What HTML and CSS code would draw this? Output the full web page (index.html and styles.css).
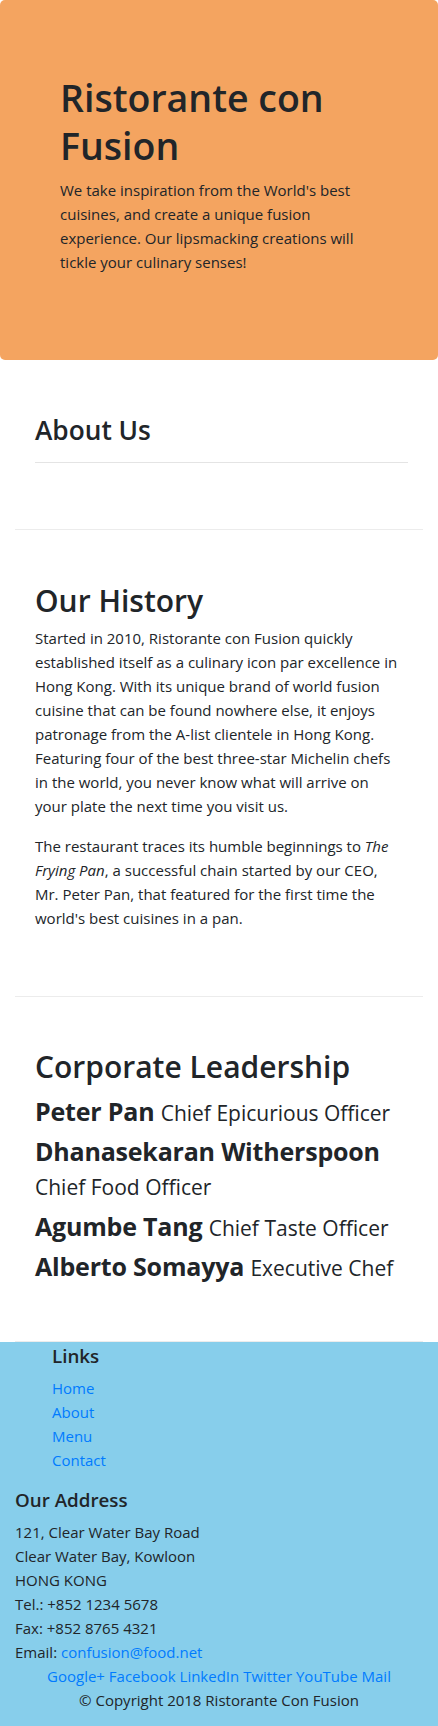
FILE: index.html
```html
<!DOCTYPE html>
<html lang="en">
<head>
<meta charset="utf-8">
<title>Ristorante con Fusion - About Us</title>
<link rel="stylesheet" href="styles.css">
</head>
<body>
<header class="jumbotron">
  <h1 class="jumbo-title">Ristorante con Fusion</h1>
  <p class="jumbo-text">We take inspiration from the World's best cuisines, and create a unique fusion experience. Our lipsmacking creations will tickle your culinary senses!</p>
</header>

<main>
  <section class="row-content row-about">
    <h3 class="section-title">About Us</h3>
    <hr class="divider">
  </section>

  <section class="row-content row-history">
    <h2 class="section-heading">Our History</h2>
    <p class="history-text">Started in 2010, Ristorante con Fusion quickly established itself as a culinary icon par excellence in Hong Kong. With its unique brand of world fusion cuisine that can be found nowhere else, it enjoys patronage from the A-list clientele in Hong Kong. Featuring four of the best three-star Michelin chefs in the world, you never know what will arrive on your plate the next time you visit us.</p>
    <p class="history-text">The restaurant traces its humble beginnings to <em>The Frying Pan</em>, a successful chain started by our CEO, Mr. Peter Pan, that featured for the first time the world's best cuisines in a pan.</p>
  </section>

  <section class="row-content row-leaders">
    <h2 class="section-heading leaders-heading">Corporate Leadership</h2>
    <ul class="leader-list">
      <li class="leader">Peter Pan <small class="leader-role">Chief Epicurious Officer</small></li>
      <li class="leader">Dhanasekaran Witherspoon <small class="leader-role">Chief Food Officer</small></li>
      <li class="leader">Agumbe Tang <small class="leader-role">Chief Taste Officer</small></li>
      <li class="leader">Alberto Somayya <small class="leader-role">Executive Chef</small></li>
    </ul>
  </section>
</main>

<footer class="footer">
  <div class="footer-links">
    <h5 class="footer-title">Links</h5>
    <ul class="link-list">
      <li><a href="#">Home</a></li>
      <li><a href="#">About</a></li>
      <li><a href="#">Menu</a></li>
      <li><a href="#">Contact</a></li>
    </ul>
  </div>
  <div class="footer-address">
    <h5 class="footer-title">Our Address</h5>
    <address class="address">
      121, Clear Water Bay Road<br>
      Clear Water Bay, Kowloon<br>
      HONG KONG<br>
      Tel.: +852 1234 5678<br>
      Fax: +852 8765 4321<br>
      Email: <a href="#">confusion@food.net</a>
    </address>
  </div>
  <div class="social">
    <a href="#">Google+</a> <a href="#">Facebook</a> <a href="#">LinkedIn</a> <a href="#">Twitter</a> <a href="#">YouTube</a> <a href="#">Mail</a>
  </div>
  <p class="copyright">© Copyright 2018 Ristorante Con Fusion</p>
</footer>
</body>
</html>
```

FILE: styles.css
```css
html, body {
  margin: 0;
  padding: 0;
}

body {
  font-family: "Open Sans", "Noto Sans", sans-serif;
  font-size: 15px;
  line-height: 24px;
  color: #212529;
  background: #ffffff;
}

a {
  color: #007bff;
  text-decoration: none;
}

/* Jumbotron */
.jumbotron {
  background: #f4a460;
  border-radius: 5px;
  padding: 74px 60px 86px 60px;
}

.jumbo-title {
  margin: 0 0 8px 0;
  font-size: 37.5px;
  line-height: 48px;
  font-weight: 600;
}

.jumbo-text {
  margin: 0;
}

/* Content rows */
.row-content {
  margin: 0 15px;
  padding: 50px 15px 50px 20px;
  border-bottom: 1px solid #ececec;
}

.row-about {
  padding-top: 54px;
}

.section-title {
  margin: 0;
  font-size: 26.25px;
  line-height: 33.6px;
  font-weight: 600;
}

.divider {
  margin: 14px 0 16px 0;
  border: 0;
  border-top: 1px solid #e4e4e4;
  height: 0;
}

.row-history {
  padding-top: 52px;
  padding-right: 21px;
}

.section-heading {
  margin: 0 0 6px 0;
  font-size: 30px;
  line-height: 38.4px;
  font-weight: 600;
}

.history-text {
  margin: 0 0 16px 0;
}

.row-leaders {
  padding-top: 51px;
}

.leaders-heading {
  margin-bottom: 8.4px;
}

.leader-list {
  list-style: none;
  margin: 0;
  padding: 0;
}

.leader {
  font-size: 25px;
  line-height: 33.6px;
  font-weight: 700;
  letter-spacing: -0.2px;
  margin-bottom: 7px;
}

.leader-role {
  font-size: 21px;
  line-height: 1;
  font-weight: 400;
  letter-spacing: 0;
}

/* Footer */
.footer {
  background: #87ceeb;
  padding: 2px 0 15px 0;
}

.footer-title {
  margin: 0 0 8px 0;
  font-size: 18.75px;
  line-height: 24px;
  font-weight: 600;
}

.footer-links {
  padding-left: 52px;
}

.link-list {
  list-style: none;
  margin: 0 0 16px 0;
  padding: 0;
}

.footer-address {
  padding-left: 15px;
}

.address {
  font-style: normal;
  margin: 0;
}

.social {
  text-align: center;
}

.copyright {
  margin: 0;
  text-align: center;
}
```
